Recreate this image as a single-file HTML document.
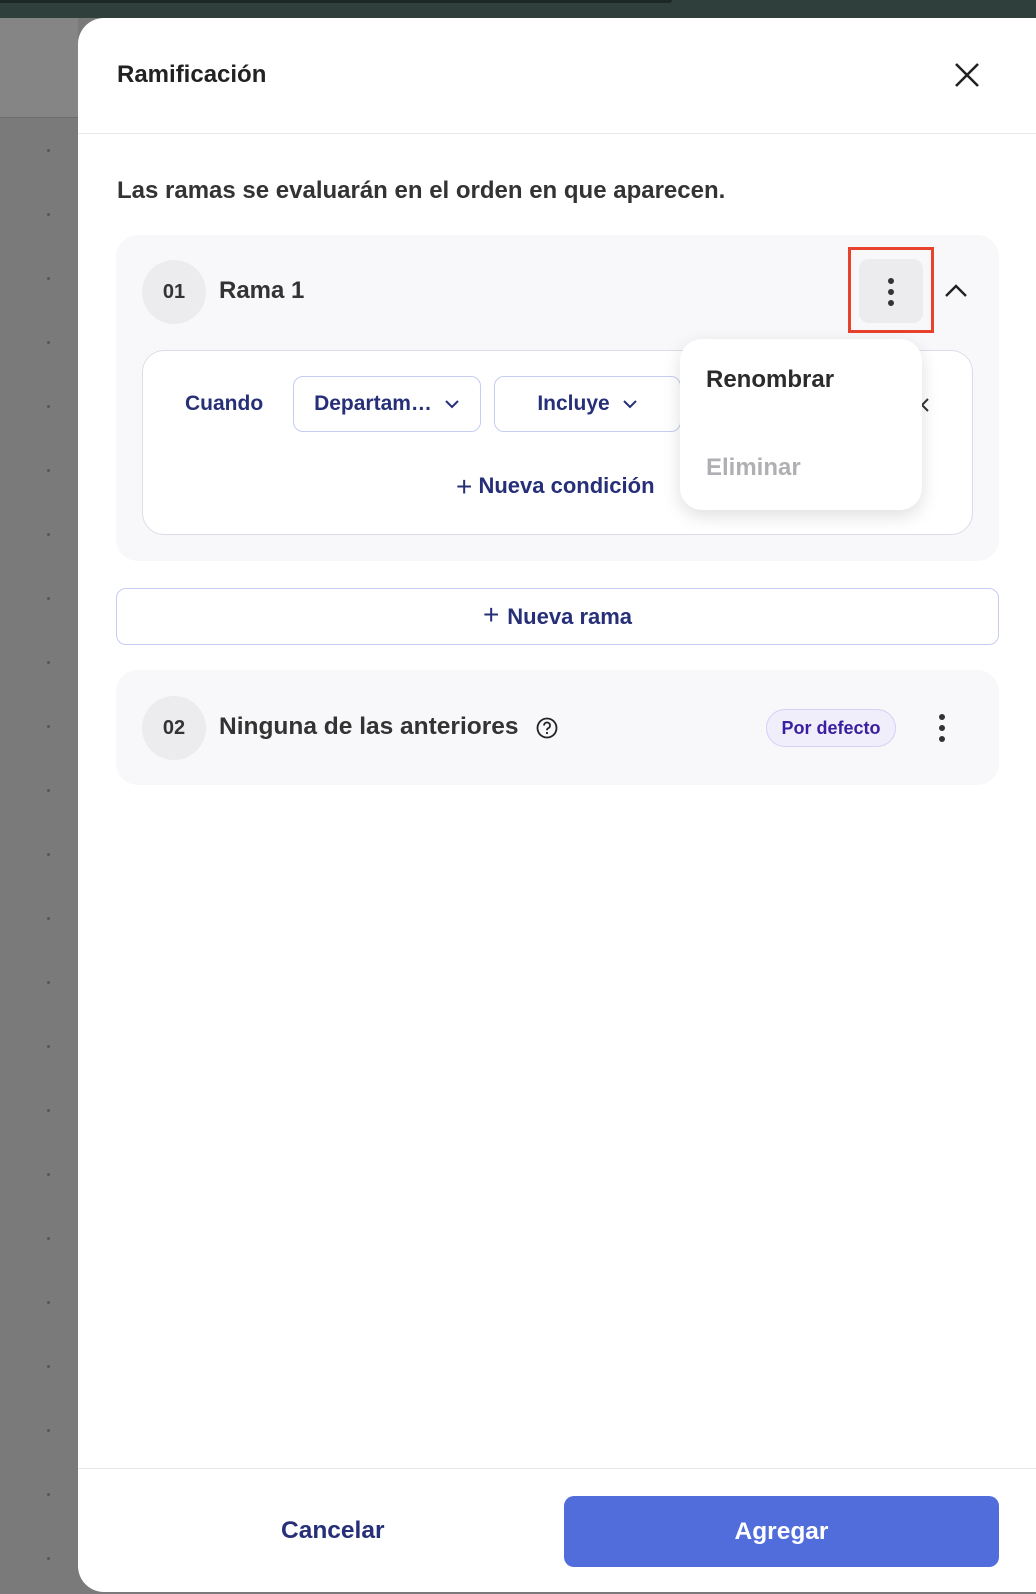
<!DOCTYPE html>
<html><head><meta charset="utf-8"><style>
*{box-sizing:border-box;margin:0;padding:0}
body{width:1036px;height:1594px;position:relative;overflow:hidden;background:#7a7a7a;font-family:"Liberation Sans",sans-serif;color:#2b2b33}
.top{position:absolute;left:0;top:0;width:1036px;height:18px;background:#2f3f3b}
.topin{position:absolute;left:0;top:0;width:672px;height:3px;background:#1c2825;border-radius:0 0 12px 0}
.topl{position:absolute;left:0;top:18px;width:78px;height:100px;background:#858585;border-bottom:1px solid #6d6d6d}
.dot{position:absolute;left:47px;width:3px;height:3px;background:#555;border-radius:50%}
.modal{position:absolute;left:78px;top:18px;width:980px;height:1574px;background:#fff;border-radius:26px 0 0 26px}
.abs{position:absolute}
.t{font-weight:bold}
.navy{color:#262f78}
.dd{position:absolute;top:376px;height:56px;border:1px solid #c5cdf3;border-radius:10px;background:#fff;font-size:21px;font-weight:bold;color:#262f78;display:flex;align-items:center;justify-content:center;gap:12px}
.circ{position:absolute;left:142px;width:64px;height:64px;border-radius:50%;background:#ececee;font-size:20px;font-weight:bold;display:flex;align-items:center;justify-content:center;color:#333}
</style></head><body>
<div class="top"></div><div class="topin"></div><div class="topl"></div>
<div class="dot" style="top:149px"></div><div class="dot" style="top:213px"></div><div class="dot" style="top:277px"></div><div class="dot" style="top:341px"></div><div class="dot" style="top:405px"></div><div class="dot" style="top:469px"></div><div class="dot" style="top:533px"></div><div class="dot" style="top:597px"></div><div class="dot" style="top:661px"></div><div class="dot" style="top:725px"></div><div class="dot" style="top:789px"></div><div class="dot" style="top:853px"></div><div class="dot" style="top:917px"></div><div class="dot" style="top:981px"></div><div class="dot" style="top:1045px"></div><div class="dot" style="top:1109px"></div><div class="dot" style="top:1173px"></div><div class="dot" style="top:1237px"></div><div class="dot" style="top:1301px"></div><div class="dot" style="top:1365px"></div><div class="dot" style="top:1429px"></div><div class="dot" style="top:1493px"></div><div class="dot" style="top:1557px"></div>
<div class="modal"></div>
<div class="abs t" style="left:117px;top:61px;font-size:24px;color:#222">Ramificación</div>
<svg class="abs" style="left:954px;top:62px" width="26" height="26" viewBox="0 0 26 26"><path d="M2 2L24 24M24 2L2 24" stroke="#222" stroke-width="2.6"/></svg>
<div class="abs" style="left:78px;top:133px;width:958px;height:1px;background:#e8e8ec"></div>
<div class="abs t" style="left:117px;top:177px;font-size:24px;color:#333">Las ramas se evaluarán en el orden en que aparecen.</div>

<div class="abs" style="left:116px;top:235px;width:883px;height:326px;background:#f8f8fa;border-radius:22px"></div>
<div class="circ" style="top:260px">01</div>
<div class="abs t" style="left:219px;top:277px;font-size:24px;color:#333">Rama 1</div>
<div class="abs" style="left:848px;top:247px;width:86px;height:86px;border:3px solid #e8412c"></div>
<div class="abs" style="left:859px;top:259px;width:64px;height:64px;background:#ececee;border-radius:10px"></div>
<div class="abs" style="left:888px;top:278px;width:6px;height:6px;border-radius:50%;background:#333"></div>
<div class="abs" style="left:888px;top:289px;width:6px;height:6px;border-radius:50%;background:#333"></div>
<div class="abs" style="left:888px;top:300px;width:6px;height:6px;border-radius:50%;background:#333"></div>
<svg class="abs" style="left:944px;top:284px" width="24" height="14" viewBox="0 0 24 14"><path d="M2 12L12 2L22 12" stroke="#222" stroke-width="2.4" fill="none"/></svg>

<div class="abs" style="left:142px;top:350px;width:831px;height:185px;background:#fff;border:1px solid #dcdde8;border-radius:22px"></div>
<div class="abs t navy" style="left:185px;top:392px;font-size:21px">Cuando</div>
<div class="dd" style="left:293px;width:188px">Departam… <svg width="16" height="10" viewBox="0 0 16 10"><path d="M2 2L8 8L14 2" stroke="#262f78" stroke-width="2" fill="none"/></svg></div>
<div class="dd" style="left:494px;width:187px">Incluye <svg width="16" height="10" viewBox="0 0 16 10"><path d="M2 2L8 8L14 2" stroke="#262f78" stroke-width="2" fill="none"/></svg></div>
<svg class="abs" style="left:920px;top:397px" width="10" height="16" viewBox="0 0 10 16"><path d="M8 2L2 8L8 14" stroke="#333" stroke-width="2" fill="none"/></svg>
<div class="abs t navy" style="left:456px;top:471px;font-size:22px"><span style="font-weight:normal;font-size:28px;vertical-align:-3px">+</span> Nueva condición</div>

<div class="abs" style="left:680px;top:339px;width:242px;height:171px;background:#fff;border-radius:22px;box-shadow:0 6px 18px rgba(0,0,0,.13)"></div>
<div class="abs t" style="left:706px;top:366px;font-size:24px;color:#2b2b2b">Renombrar</div>
<div class="abs t" style="left:706px;top:454px;font-size:24px;color:#b0b0b4">Eliminar</div>

<div class="abs" style="left:116px;top:588px;width:883px;height:57px;border:1px solid #c5cdf3;border-radius:10px;display:flex;align-items:center;justify-content:center;font-size:22px;font-weight:bold;color:#262f78"><span style="font-weight:normal;font-size:28px;margin-right:8px;margin-top:-3px">+</span>Nueva rama</div>

<div class="abs" style="left:116px;top:670px;width:883px;height:115px;background:#f8f8fa;border-radius:22px"></div>
<div class="circ" style="top:696px">02</div>
<div class="abs t" style="left:219px;top:713px;font-size:24.5px;color:#333">Ninguna de las anteriores</div>
<svg class="abs" style="left:536px;top:717px" width="22" height="22" viewBox="0 0 22 22"><circle cx="11" cy="11" r="9.5" stroke="#222" stroke-width="1.8" fill="none"/><path d="M8 8.5a3 3 0 1 1 4 2.8c-.8.4-1 1-1 2" stroke="#222" stroke-width="1.8" fill="none"/><circle cx="11" cy="16" r="1.1" fill="#222"/></svg>
<div class="abs" style="left:766px;top:709px;width:130px;height:38px;border-radius:19px;background:#f1eefc;border:1px solid #d7cff5;display:flex;align-items:center;justify-content:center;font-size:18px;font-weight:bold;color:#3a1fa0">Por defecto</div>
<div class="abs" style="left:939px;top:714px;width:6px;height:6px;border-radius:50%;background:#333"></div>
<div class="abs" style="left:939px;top:725px;width:6px;height:6px;border-radius:50%;background:#333"></div>
<div class="abs" style="left:939px;top:736px;width:6px;height:6px;border-radius:50%;background:#333"></div>

<div class="abs" style="left:78px;top:1468px;width:958px;height:1px;background:#e8e8ec"></div>
<div class="abs t navy" style="left:281px;top:1517px;font-size:24.5px">Cancelar</div>
<div class="abs" style="left:564px;top:1496px;width:435px;height:71px;background:#516ddb;border-radius:10px;display:flex;align-items:center;justify-content:center;color:#fff;font-size:24.5px;font-weight:bold">Agregar</div>
</body></html>
